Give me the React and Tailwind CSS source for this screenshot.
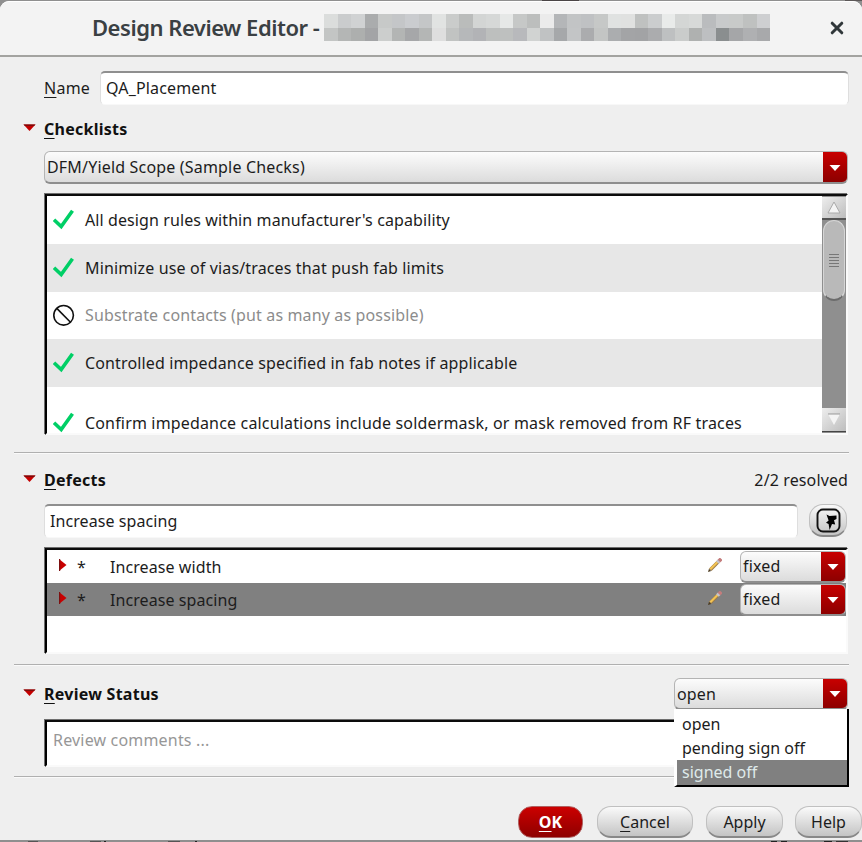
const MOSAIC_TOP = ['#dbdddc','#cacccd','#d0d2d3','#aaacad','#c7c9c8','#c4c6c8','#cacccf','#c4c6c7','#e1e3e2','#cacccb','#babcbb','#d3d5d4','#d6d8d7','#e6e8e7','#c6c8c7','#bcbebd','#ebebeb','#b4b6b8','#c2c4c5','#bfc1c3','#c6c8c7','#e0e2e1','#e0e1e0','#bfc1c0','#cbcdce','#e9ebea','#d4d6d5','#d7d9d8','#babcbe','#c8cacb','#c8cac9','#bfc1c0','#cecfd1'];
const MOSAIC_BOTTOM = ['#c3c5c4','#b4b6b5','#adafae','#a3a4a6','#cccecd','#b3b5b4','#a6a7a9','#b4b6b5','#dedede','#c1c3c2','#b6b8ba','#b2b3b6','#bdbfbe','#bec0bf','#b8b9bc','#d1d3d2','#c0c2c3','#a6a8aa','#c3c5c6','#abacae','#c3c5c4','#abadaf','#a3a4a6','#a2a3a5','#abacae','#bec0c1','#cacccb','#afb1b0','#bdbfc1','#8a8e8f','#a5a6a8','#afb0b2','#a8a9ab'];

function MosaicRow({ colors }) {
  return (
    <div className="flex h-[13.5px]">
      {colors.map((c, i) => (
        <div key={i} className="flex-1" style={{ background: c }} />
      ))}
    </div>
  );
}

function Separator({ className }) {
  return <div className={`ml-[14px] h-[2px] w-[835px] shrink-0 border-t border-[#b0b0b0] bg-[#fafafa] ${className}`} />;
}

function SectionHeader({ letter, rest, children }) {
  return (
    <div className="flex h-[32px] items-center pl-[23px] pr-[14px]">
      <svg width="13" height="7" viewBox="0 0 13 7" className="mr-[8px] -mt-[3px] shrink-0">
        <path d="M0.5 0.5H12.5L6.5 7Z" fill="#c40000" />
        <path d="M0.5 0.5H12.5L11 2H2Z" fill="#7d0a0a" />
      </svg>
      <h2 className="font-bold tracking-[0.26px] text-[#111]">
        <u className="underline-offset-[3px] decoration-1">{letter}</u>
        {rest}
      </h2>
      {children}
    </div>
  );
}

function Select({ value, className }) {
  return (
    <div className={`flex shrink-0 overflow-hidden rounded-[6px] border border-[#b4b4b4] border-b-2 border-b-[#8e8e8e] bg-linear-to-b from-[#fcfcfc] to-[#dcdcdc] ${className}`}>
      <span className="flex flex-1 items-center pl-[2px]">{value}</span>
      <span className="flex w-[24px] items-center justify-center bg-linear-to-b from-[#c80000] to-[#8d0000]">
        <svg width="12" height="6" viewBox="0 0 12 6" className="mt-[1px]">
          <path d="M0.5 0H11.5L6 6Z" fill="#fff" />
        </svg>
      </span>
    </div>
  );
}

function Field({ value, className }) {
  return (
    <div className={`flex items-center rounded-[5px] border border-[#dedede] border-b-[#f8f8f8] border-t-2 border-t-[#8f8f8f] bg-white pb-[2px] pl-[5px] ${className}`}>
      {value}
    </div>
  );
}

const SUNKEN = 'border-l-2 border-t-2 border-r-2 border-b-2 border-l-black border-t-[#0c0c0c] border-r-[#fafafa] border-b-[#fafafa] bg-white shadow-[-1px_-1px_0_#6e6e6e]';

function Check() {
  return (
    <svg width="22" height="22" viewBox="0 0 22 22">
      <path d="M1 10.8L8.2 17.6L19.5 1.8" fill="none" stroke="#00cf66" strokeWidth="3.6" />
    </svg>
  );
}

function Ban() {
  return (
    <svg width="22" height="22" viewBox="0 0 22 22" fill="none" stroke="#111" strokeWidth="1.6">
      <circle cx="10.6" cy="11.3" r="9.8" />
      <path d="M3.8 4.4L17.5 18.2" />
    </svg>
  );
}

function Pencil() {
  return (
    <svg width="14" height="14" viewBox="0 0 14 14">
      <path d="M2.3 11.7L11 3" stroke="#9a7a4a" strokeWidth="3.4" />
      <path d="M2.3 11.2L10 3.5" stroke="#f3c352" strokeWidth="2.2" />
      <path d="M9.4 4.6L11.2 2.8" stroke="#c4c4cc" strokeWidth="3.6" />
      <path d="M11 3L13.2 0.8" stroke="#c47c7c" strokeWidth="3.8" />
      <path d="M0 14L1 10.8L3.2 13Z" fill="#4c3a1e" />
    </svg>
  );
}

const CHECKS = [
  { text: "All design rules within manufacturer's capability" },
  { text: 'Minimize use of vias/traces that push fab limits' },
  { text: 'Substrate contacts (put as many as possible)', off: true },
  { text: 'Controlled impedance specified in fab notes if applicable' },
  { text: 'Confirm impedance calculations include soldermask, or mask removed from RF traces', tall: true },
];

function Checklist() {
  return (
    <div className={`ml-[45px] mt-[10px] flex h-[241px] w-[803px] shrink-0 ${SUNKEN}`}>
      <div className="flex-1 overflow-hidden">
        {CHECKS.map((c, i) => (
          <div
            key={c.text}
            className={`flex items-center gap-[10px] pl-[6px] ${c.tall ? 'h-[72px]' : 'h-[47.8px]'} ${i % 2 ? 'bg-[#e7e7e7]' : 'bg-white'} ${c.off ? 'text-[#8c8c8c]' : ''}`}
          >
            {c.off ? <Ban /> : <Check />}
            <span className={`whitespace-nowrap ${i === 0 ? 'tracking-[0.1px]' : c.tall ? 'tracking-[0.165px]' : 'tracking-[0.14px]'}`}>{c.text}</span>
          </div>
        ))}
      </div>
      <div className="flex w-[24px] flex-col bg-[#8f8f8f]">
        <div className="mt-px flex h-[23px] items-center justify-center border-b-2 border-[#555] bg-linear-to-br from-[#eee] to-[#bdbdbd]">
          <svg width="14" height="13" viewBox="0 0 14 13">
            <path d="M1 12L7 1L13 12Z" fill="#f4f4f4" stroke="#aaa" />
          </svg>
        </div>
        <div className="mx-px flex h-[81px] flex-col items-center justify-center gap-[2px] rounded-[11px] border border-b-2 border-[#d6d6d6] border-b-[#6c6c6c] bg-[#b9b9b9]">
          {[0, 1, 2, 3, 4].map((n) => (
            <div key={n} className="h-px w-[10px] bg-[#777]" />
          ))}
        </div>
        <div className="mt-auto mb-px flex h-[24px] items-center justify-center border-b border-[#444] bg-linear-to-br from-[#eee] to-[#bdbdbd]">
          <svg width="14" height="13" viewBox="0 0 14 13">
            <path d="M1 1H13L7 12Z" fill="#f4f4f4" />
            <path d="M1 1H13" stroke="#999" />
          </svg>
        </div>
      </div>
    </div>
  );
}

function DefectRow({ text, selected }) {
  return (
    <div className={`flex h-[33px] items-center pl-[12px] ${selected ? 'bg-[#808080]' : ''}`}>
      <svg width="8" height="12" viewBox="0 0 8 12" className="-mt-[3px]">
        <path d="M0 0L7.5 6L0 12Z" fill="#c80000" />
        <path d="M0 0H1.2V12H0Z" fill="#7d1010" />
      </svg>
      <span className="w-[43px] pl-[10px]">*</span>
      <span className="flex-1 tracking-[0.08px]">{text}</span>
      <span className="-mt-[3px] mr-[18px]"><Pencil /></span>
      <Select value="fixed" className="h-[32px] w-[106px] tracking-[0.15px]" />
    </div>
  );
}

function Button({ letter, rest, className }) {
  return (
    <button className={`flex h-[32px] items-center justify-center rounded-[14px] border ${className}`}>
      {letter && <u className="underline-offset-[3px] decoration-1">{letter}</u>}
      {rest}
    </button>
  );
}

const GREY_BUTTON = 'border-[#c0c0c0] border-b-2 border-b-[#888] bg-linear-to-b from-[#fafafa] to-[#c4c4c4]';

export default function App() {
  return (
    <div className="flex h-[842px] w-[862px] flex-col overflow-hidden bg-[#8f8f8f] font-['Noto_Sans','Open_Sans',sans-serif] text-[16px] leading-[22px] text-[#1c1c1c]">
      {/* sliver of the window behind the dialog */}
      <div className="flex h-px shrink-0">
        <div className="ml-[542px] w-[37px] bg-[#4a4546]" />
        <div className="ml-[266px] w-[17px] bg-[#5c5858]" />
      </div>
      <div className="flex h-[839px] shrink-0 flex-col rounded-t-[9px] bg-[#efefef]">
        <header className="flex h-[56px] shrink-0 items-center rounded-t-[9px] border-b-2 border-t border-b-[#a3a3a0] border-t-white bg-[#f3f3f3] pb-[2px] pl-[92px]">
          <h1 className="-mt-px w-[232px] whitespace-nowrap text-[22px] font-semibold tracking-[-0.48px] text-[#3a4043]">Design Review Editor -</h1>
          <div className="w-[446px]">
            <MosaicRow colors={MOSAIC_TOP} />
            <MosaicRow colors={MOSAIC_BOTTOM} />
          </div>
          <svg width="14" height="14" viewBox="0 0 14 14" className="ml-[60px]">
            <path d="M2.2 2.2L11.8 11.8M11.8 2.2L2.2 11.8" stroke="#30373a" strokeWidth="3" strokeLinecap="round" />
          </svg>
        </header>

        <div className="mt-[14px] flex h-[34px] items-center pl-[44px]">
          <label className="w-[56px] tracking-[0.25px]">
            <u className="underline-offset-[3px] decoration-1">N</u>ame
          </label>
          <Field value="QA_Placement" className="h-[34px] w-[749px] tracking-[0.15px]" />
        </div>

        <div className="mt-[8px]"><SectionHeader letter="C" rest="hecklists" /></div>
        <Select value="DFM/Yield Scope (Sample Checks)" className="ml-[44px] mt-[6px] h-[33px] w-[804px] tracking-[0.18px]" />
        <Checklist />

        <Separator className="mt-[17px]" />

        <div className="mt-[10px]">
          <SectionHeader letter="D" rest="efects">
            <span className="ml-auto tracking-[0.12px]">2/2 resolved</span>
          </SectionHeader>
        </div>
        <div className="mt-[8px] flex h-[34px] shrink-0 pl-[44px]">
          <Field value="Increase spacing" className="h-[34px] w-[754px] tracking-[0.08px]" />
          <button className={`ml-[11px] flex h-[33px] w-[38px] items-center justify-center rounded-[14px] border ${GREY_BUTTON}`}>
            <svg width="25" height="25" viewBox="0 0 25 25">
              <rect x="1.5" y="1.5" width="22" height="22" rx="5.5" fill="none" stroke="#111" strokeWidth="1.9" />
              <path d="M10.5 6.5L13.5 8L20.5 7.5L20.5 11L18 12.2L19.2 16.6L16 16L13.6 22L12.6 16L10 14.8L12.6 12.6Z" fill="#000" />
            </svg>
          </button>
        </div>
        <div className={`ml-[45px] mt-[10px] h-[106px] w-[803px] shrink-0 ${SUNKEN}`}>
          <DefectRow text="Increase width" />
          <DefectRow text="Increase spacing" selected />
        </div>

        <Separator className="mt-[10px]" />

        <div className="relative mt-[12px]">
          <SectionHeader letter="R" rest="eview Status">
            <Select value="open" className="ml-auto h-[32px] w-[174px] tracking-[0.15px]" />
          </SectionHeader>
          <ul className="absolute right-[13px] top-[31px] z-10 h-[78px] w-[175px] border-b-2 border-l-[3px] border-r-2 border-b-black border-l-white border-r-black bg-white pt-[3px]">
            <li className="h-[24px] pl-[5px] leading-[24px]">open</li>
            <li className="h-[24px] pl-[5px] leading-[24px]">pending sign off</li>
            <li className="h-[25px] bg-[#808080] pl-[5px] leading-[24px] text-[#dfeaea]">signed off</li>
          </ul>
        </div>
        <div className={`ml-[45px] mt-[10px] h-[47px] w-[803px] shrink-0 pl-[6px] pt-[7px] tracking-[0.18px] text-[#979797] ${SUNKEN}`}>
          Review comments ...
        </div>

        <Separator className="mt-[9px]" />

        <footer className="mt-[28px] flex shrink-0 pl-[518px]">
          <Button letter="O" rest="K" className="w-[65px] border-[#b06060] bg-linear-to-b from-[#cc0000] to-[#8e0000] font-bold text-white" />
          <Button letter="C" rest="ancel" className={`ml-[14px] w-[96px] ${GREY_BUTTON}`} />
          <Button rest="Apply" className={`ml-[13px] w-[77px] ${GREY_BUTTON}`} />
          <Button rest="Help" className={`ml-[12px] w-[67px] ${GREY_BUTTON}`} />
        </footer>
      </div>
      <div className="mt-px flex h-px shrink-0">
        <div className="ml-[28px] w-[10px] bg-[#555]" />
        <div className="ml-[52px] w-[11px] bg-[#555]" />
        <div className="ml-[3px] w-[2px] bg-[#222]" />
        <div className="ml-[62px] w-[12px] bg-[#555]" />
        <div className="ml-[15px] w-[2px] bg-[#222]" />
        <div className="ml-[574px] w-[6px] bg-[#222]" />
        <div className="ml-[4px] w-[6px] bg-[#222]" />
        <div className="ml-[37px] w-[8px] bg-[#222]" />
        <div className="ml-[4px] w-[12px] bg-[#333]" />
      </div>
    </div>
  );
}
